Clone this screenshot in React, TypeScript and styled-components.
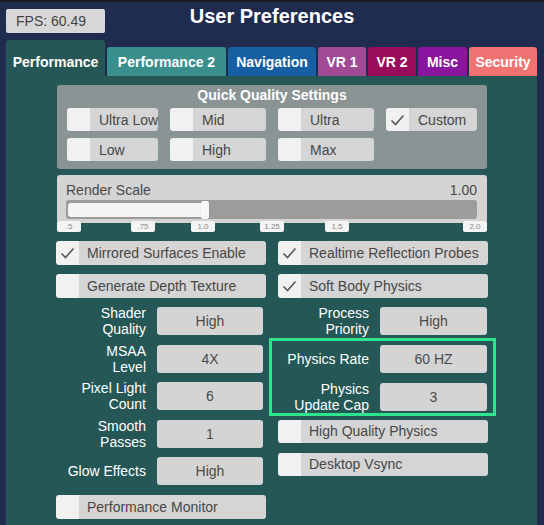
import React from "react";
import styled, { createGlobalStyle } from "styled-components";

const GlobalStyle = createGlobalStyle`
  html, body {
    margin: 0;
    padding: 0;
    background: #1f2c4f;
  }
  body {
    font-family: "Liberation Sans", Arial, sans-serif;
  }
`;

interface TabDef {
  label: string;
  width: number;
  color: string;
  active?: boolean;
}

const tabs: TabDef[] = [
  { label: "Performance", width: 99, color: "#245755", active: true },
  { label: "Performance 2", width: 119, color: "#3a8e8c" },
  { label: "Navigation", width: 88, color: "#165fa2" },
  { label: "VR 1", width: 48, color: "#a04a96" },
  { label: "VR 2", width: 48, color: "#990c5c" },
  { label: "Misc", width: 49, color: "#8a159f" },
  { label: "Security", width: 68, color: "#f07272" },
];

const quick = [
  { label: "Ultra Low", w: 91 },
  { label: "Mid", w: 96 },
  { label: "Ultra", w: 96 },
  { label: "Custom", w: 91, checked: true },
  { label: "Low", w: 91 },
  { label: "High", w: 96 },
  { label: "Max", w: 96 },
];

const ticks = [
  { label: ".5", left: 0 },
  { label: ".75", left: 74 },
  { label: "1.0", left: 134 },
  { label: "1.25", left: 203 },
  { label: "1.5", left: 268 },
  { label: "2.0", left: 406 },
];

const CheckMark = () => (
  <svg width="23" height="24" viewBox="0 0 23 24">
    <polyline points="5.5,12.5 9.5,16.5 17.5,7.5" fill="none" stroke="#575757" strokeWidth="1.6" />
  </svg>
);

const Toggle: React.FC<{ label: string; checked?: boolean; width?: number; height?: number; pad?: number }> = ({
  label,
  checked,
  width,
  height = 24,
  pad = 8,
}) => (
  <ToggleBox $w={width} $h={height}>
    <CheckSquare>{checked && <CheckMark />}</CheckSquare>
    <ToggleLabel $pad={pad}>{label}</ToggleLabel>
  </ToggleBox>
);

const DropRow: React.FC<{ label: React.ReactNode; value: string; labelW: number; dropW: number }> = ({
  label,
  value,
  labelW,
  dropW,
}) => (
  <Row $labelW={labelW} $dropW={dropW}>
    <RowLabel>{label}</RowLabel>
    <Dropdown>{value}</Dropdown>
  </Row>
);

export default function App() {
  return (
    <Screen>
      <GlobalStyle />
      <Header>
        <FpsBox>FPS: 60.49</FpsBox>
        <Title>User Preferences</Title>
        <div />
      </Header>
      <TabBar>
        {tabs.map((t) => (
          <Tab key={t.label} $w={t.width} $color={t.color} $active={t.active}>
            {t.label}
          </Tab>
        ))}
      </TabBar>
      <Panel>
        <QuickBox>
          <QuickTitle>Quick Quality Settings</QuickTitle>
          <QuickGrid>
            {quick.map((q) => (
              <Toggle key={q.label} label={q.label} checked={q.checked} width={q.w} height={23} pad={9} />
            ))}
          </QuickGrid>
        </QuickBox>

        <RenderBox>
          <RenderHead>
            <span>Render Scale</span>
            <span>1.00</span>
          </RenderHead>
          <Track>
            <Fill style={{ width: 136 }} />
            <Handle />
          </Track>
        </RenderBox>
        <TickRow>
          {ticks.map((t) => (
            <Tick key={t.label} style={{ left: t.left }}>
              {t.label}
            </Tick>
          ))}
        </TickRow>

        <ToggleGrid>
          <Toggle label="Mirrored Surfaces Enable" checked />
          <Toggle label="Realtime Reflection Probes" checked />
          <Toggle label="Generate Depth Texture" />
          <Toggle label="Soft Body Physics" checked />
        </ToggleGrid>

        <Columns>
          <Column>
            <DropRow labelW={90} dropW={106} label={<>Shader<br />Quality</>} value="High" />
            <DropRow labelW={90} dropW={106} label={<>MSAA<br />Level</>} value="4X" />
            <DropRow labelW={90} dropW={106} label={<>Pixel Light<br />Count</>} value="6" />
            <DropRow labelW={90} dropW={106} label={<>Smooth<br />Passes</>} value="1" />
            <DropRow labelW={90} dropW={106} label="Glow Effects" value="High" />
            <Toggle label="Performance Monitor" />
          </Column>
          <Column>
            <DropRow labelW={91} dropW={107} label={<>Process<br />Priority</>} value="High" />
            <Highlight>
              <DropRow labelW={97} dropW={107} label="Physics Rate" value="60 HZ" />
              <DropRow labelW={97} dropW={107} label={<>Physics<br />Update Cap</>} value="3" />
            </Highlight>
            <RightToggles>
              <Toggle label="High Quality Physics" height={23} />
              <Toggle label="Desktop Vsync" height={23} />
            </RightToggles>
          </Column>
        </Columns>
      </Panel>
    </Screen>
  );
}

const Screen = styled.div`
  width: 544px;
  height: 525px;
  box-sizing: border-box;
  border-top: 2px solid #1b1b1d;
  background: #1f2c4f;
  display: flex;
  flex-direction: column;
  overflow: hidden;
`;

const Header = styled.div`
  height: 38px;
  display: grid;
  grid-template-columns: 1fr auto 1fr;
  align-items: start;
  padding: 0 6px;
`;

const FpsBox = styled.div`
  width: 99px;
  height: 24px;
  margin-top: 7px;
  box-sizing: border-box;
  padding-left: 10px;
  background: #d7d7d7;
  border-radius: 2px;
  color: #444;
  font-size: 14px;
  line-height: 24px;
`;

const Title = styled.div`
  margin-top: 3px;
  color: #ffffff;
  font-size: 20px;
  font-weight: 700;
  line-height: 23px;
`;

const TabBar = styled.div`
  height: 36px;
  display: flex;
  align-items: flex-end;
  gap: 2px;
  padding-left: 6px;
`;

const Tab = styled.div<{ $w: number; $color: string; $active?: boolean }>`
  width: ${(p) => p.$w}px;
  height: ${(p) => (p.$active ? 36 : 29)}px;
  padding-top: ${(p) => (p.$active ? 7 : 0)}px;
  box-sizing: border-box;
  display: flex;
  align-items: center;
  justify-content: center;
  background: ${(p) => p.$color};
  border-radius: 3px 3px 0 0;
  color: #ffffff;
  font-size: 14px;
  font-weight: 700;
  white-space: nowrap;
`;

const Panel = styled.div`
  flex: 1;
  margin: 0 7px 0 6px;
  padding: 9px 49px 0 50px;
  background: #245755;
  display: flex;
  flex-direction: column;
`;

const QuickBox = styled.div`
  margin-left: 1px;
  width: 430px;
  height: 84px;
  box-sizing: border-box;
  padding: 2px 0 0 10px;
  background: #8a9494;
  border-radius: 3px;
`;

const QuickTitle = styled.div`
  color: #ffffff;
  font-size: 14px;
  font-weight: 700;
  line-height: 16px;
  text-align: center;
  padding-right: 10px;
`;

const QuickGrid = styled.div`
  margin-top: 5px;
  display: grid;
  grid-template-columns: 91px 96px 96px 91px;
  column-gap: 12px;
  row-gap: 7px;
`;

const ToggleBox = styled.div<{ $w?: number; $h: number }>`
  width: ${(p) => (p.$w ? `${p.$w}px` : "auto")};
  height: ${(p) => p.$h}px;
  display: flex;
  border-radius: 3px;
  overflow: hidden;
`;

const CheckSquare = styled.div`
  width: 23px;
  flex: none;
  background: #f1f1f1;
  display: flex;
  align-items: center;
`;

const ToggleLabel = styled.div<{ $pad: number }>`
  flex: 1;
  display: flex;
  align-items: center;
  padding-left: ${(p) => p.$pad}px;
  background: #d5d5d5;
  color: #474747;
  font-size: 14px;
  white-space: nowrap;
`;

const RenderBox = styled.div`
  margin: 6px 0 0 1px;
  width: 430px;
  height: 48px;
  box-sizing: border-box;
  padding: 7px 10px 0 9px;
  background: #d4d4d4;
  border-radius: 3px;
`;

const RenderHead = styled.div`
  display: flex;
  justify-content: space-between;
  color: #4a4a4a;
  font-size: 14px;
  line-height: 16px;
`;

const Track = styled.div`
  position: relative;
  margin-top: 2px;
  height: 19px;
  background: #9c9c9c;
  border-radius: 3px;
`;

const Fill = styled.div`
  position: absolute;
  left: 2px;
  top: 3px;
  bottom: 2px;
  background: #f5f5f5;
  border-radius: 3px;
`;

const Handle = styled.div`
  position: absolute;
  left: 135px;
  top: 1px;
  width: 8px;
  height: 18px;
  background: #f8f8f8;
  border-radius: 2px;
  box-shadow: 0 0 1px rgba(0, 0, 0, 0.3);
`;

const TickRow = styled.div`
  position: relative;
  margin: -2px 0 0 1px;
  height: 11px;
`;

const Tick = styled.div`
  position: absolute;
  top: 0;
  width: 24px;
  height: 11px;
  background: #f4f4f4;
  border-radius: 2px;
  color: #8a8a8a;
  font-size: 8px;
  line-height: 11px;
  text-align: center;
`;

const ToggleGrid = styled.div`
  margin-top: 9px;
  display: grid;
  grid-template-columns: 210px 210px;
  column-gap: 12px;
  row-gap: 9px;
`;

const Columns = styled.div`
  margin-top: 9px;
  display: grid;
  grid-template-columns: 210px 210px;
  column-gap: 12px;
  align-items: start;
`;

const Column = styled.div`
  display: flex;
  flex-direction: column;
  gap: 9.5px;
`;

const Row = styled.div<{ $labelW: number; $dropW: number }>`
  display: grid;
  grid-template-columns: ${(p) => p.$labelW}px ${(p) => p.$dropW}px;
  grid-template-rows: 28px;
  column-gap: 11px;
  align-items: center;
  height: 28px;
`;

const RowLabel = styled.div`
  color: #ffffff;
  font-size: 14px;
  line-height: 16px;
  text-align: right;
  white-space: nowrap;
`;

const Dropdown = styled.div`
  height: 28px;
  background: #d4d4d4;
  border-radius: 3px;
  color: #4a4a4a;
  font-size: 14px;
  line-height: 28px;
  text-align: center;
`;

const Highlight = styled.div`
  margin: -6.5px -8px -6px -9px;
  padding: 4px 5px 2px 0;
  border: 3px solid #2ee58b;
  display: flex;
  flex-direction: column;
  gap: 10px;
`;

const RightToggles = styled.div`
  display: flex;
  flex-direction: column;
  gap: 10px;
  margin-top: 0;
`;
